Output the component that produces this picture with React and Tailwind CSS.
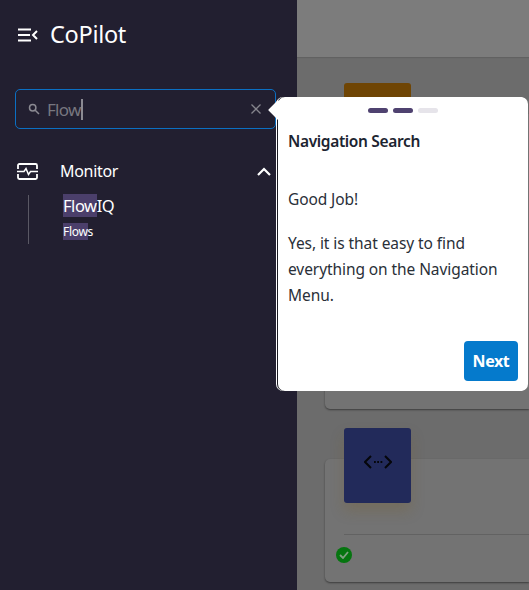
import React from "react";

const font = { fontFamily: '"Noto Sans", sans-serif' };

function Card({ tile, tileClass, h, children }) {
  return (
    <div className="flex flex-col">
      <div className={`relative z-10 ml-[19px] mb-[-44px] flex h-[75px] w-[67px] justify-center rounded-[3px] ${tileClass}`}>{tile}</div>
      <div className={`rounded-l-[5px] bg-[#737373] shadow-[0_1px_2px_rgba(0,0,0,0.45)] ${h}`}>{children}</div>
    </div>
  );
}

export default function App() {
  return (
    <div className="relative flex h-[590px] w-[529px] overflow-hidden" style={font}>
      <aside className="flex h-full w-[297px] shrink-0 flex-col bg-[#221f30] text-white">
        <div className="flex h-[69px] items-center pl-[18px]">
          <svg width="20" height="14" viewBox="0 0 20 14" fill="none" stroke="#fff" strokeWidth="2">
            <path d="M0 1.500h13M0 7h12M0 12.500h13" />
            <path d="M19 3l-4 4 4 4" />
          </svg>
          <span className="ml-[12px] text-[23.500px] leading-none tracking-[-0.3px]">CoPilot</span>
        </div>
        <div className="ml-[15px] mt-[20px] flex h-[40px] w-[261px] items-center rounded-[5px] border border-[#0b6fc2] pl-[12px] pr-[14px]">
          <svg width="12" height="12" viewBox="0 0 12 12" fill="none" stroke="#8b8a92" strokeWidth="1.500">
            <circle cx="4.700" cy="4.700" r="3.200" />
            <path d="M7.200 7.200l3.800 3.800" />
          </svg>
          <span className="ml-[7px] text-[17px] leading-none tracking-[-0.7px] text-[#77767f]">Flow</span>
          <span className="h-[21px] w-[2px] bg-[#8b8a92]" />
          <svg className="ml-auto" width="10" height="10" viewBox="0 0 10 10" stroke="#85848c" strokeWidth="1.300">
            <path d="M0.500 0.500l9 9M9.500 0.500l-9 9" />
          </svg>
        </div>
        <div className="mt-[30px] flex h-[24px] items-center pl-[17px] pr-[26px]">
          <svg width="21" height="17" viewBox="0 0 21 17" fill="none" stroke="#fff" strokeWidth="1.800">
            <path d="M1 6V2.400C1 1.600 1.600 1 2.400 1h16.200c.8 0 1.400.6 1.400 1.400V6M1 11v3.600c0 .8.6 1.400 1.400 1.400h16.200c.8 0 1.400-.6 1.400-1.400V11" />
            <path d="M0 8.500h7l2-3 2.500 6 2-3H21" strokeWidth="1.500" />
          </svg>
          <span className="ml-[22px] text-[16px] leading-none tracking-[-0.3px]">Monitor</span>
          <svg className="ml-auto" width="14" height="9" viewBox="0 0 14 9" fill="none" stroke="#fff" strokeWidth="2.200">
            <path d="M1 8l6-6 6 6" />
          </svg>
        </div>
        <div className="ml-[28px] mt-[12px] h-[49px] border-l border-[#5a5864] pl-[34px]">
          <div className="text-[16.500px] leading-[22px] tracking-[-0.45px]">
            <span className="bg-[#4b3f6b]">Flow</span>IQ
          </div>
          <div className="mt-[7px] text-[12px] leading-[15px] tracking-[-0.3px]">
            <span className="bg-[#4b3f6b]">Flow</span>s
          </div>
        </div>
      </aside>

      <main className="flex flex-1 flex-col overflow-hidden bg-[#6c6c6c]">
        <div className="h-[57px] shrink-0 bg-[#7c7c7c] shadow-[0_1px_1px_rgba(0,0,0,0.1)]" />
        <div className="flex flex-col gap-[19px] pl-[28px] pt-[26px]">
          <Card tileClass="bg-[#6f4504]" h="h-[295px]" />
          <Card
            tileClass="bg-[#222a5a] shadow-[0_8px_14px_rgba(120,90,30,0.25)]"
            h="h-[123px]"
            tile={
              <svg className="mt-[27px]" width="28" height="14" viewBox="0 0 28 14" fill="none" stroke="#05060a" strokeWidth="2">
                <path d="M7 1L1 7l6 6M21 1l6 6-6 6" />
                <path d="M10 7h1.800M13.200 7H15M16.500 7h1.800" />
              </svg>
            }
          >
            <div className="ml-[19px] mt-[75px] border-t border-[#626262]" />
            <div className="-ml-[8px] mt-[12px] flex h-[16px] w-[16px] translate-x-[19px] items-center justify-center rounded-full bg-[#05750f]">
              <svg width="10" height="8" viewBox="0 0 10 8" fill="none" stroke="#7f9f80" strokeWidth="1.800">
                <path d="M1 4l3 3 5-6" />
              </svg>
            </div>
          </Card>
        </div>
      </main>

      <div className="absolute left-[277px] top-[97px] z-20 flex h-[294px] w-[251px] flex-col rounded-[7px] bg-white text-[#1c2430] shadow-[-1px_0_0_#ffffff,inset_1px_0_0_#1b1a22]">
        <div className="absolute -left-[6px] top-[6px] h-[14px] w-[14px] rotate-45 bg-white" />
        <div className="relative mt-[11px] flex justify-center gap-[5px]">
          <span className="h-[5px] w-[20px] rounded-full bg-[#4f4270]" />
          <span className="h-[5px] w-[20px] rounded-full bg-[#4f4270]" />
          <span className="h-[5px] w-[20px] rounded-full bg-[#e6e4ea]" />
        </div>
        <h2 className="relative ml-[11px] mt-[16px] text-[15.500px] font-semibold leading-[24px] tracking-[-0.35px]">Navigation Search</h2>
        <p className="ml-[11px] mt-[34px] text-[15.500px] leading-[24px] tracking-[-0.1px] text-[#2a3038]">Good Job!</p>
        <p className="ml-[11px] mr-[14px] mt-[19px] text-[15.500px] leading-[26px] tracking-[-0.08px] text-[#2a3038]">
          Yes, it is that easy to find everything on the Navigation Menu.
        </p>
        <button className="absolute bottom-[10px] right-[10px] flex h-[40px] w-[54px] items-center justify-center rounded-[4px] bg-[#057acc] text-[16px] font-bold tracking-[-0.4px] text-white">
          Next
        </button>
      </div>
    </div>
  );
}
